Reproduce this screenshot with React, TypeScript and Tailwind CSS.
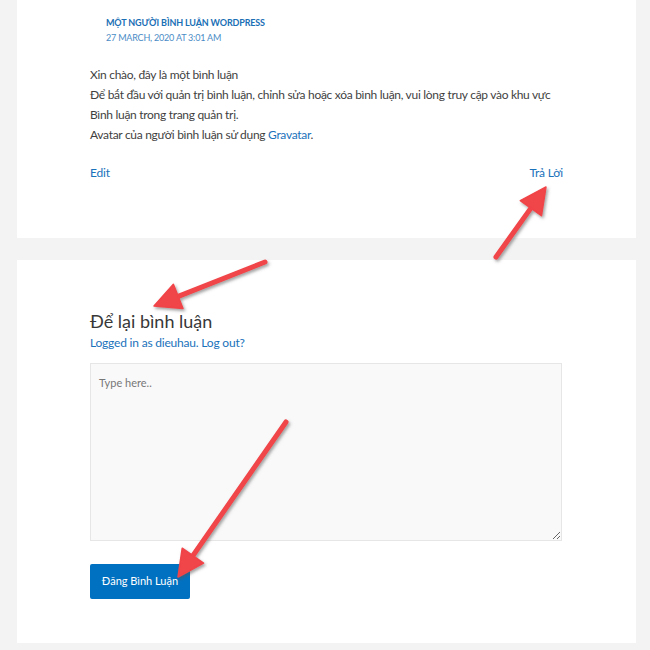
import React from 'react';

type Pt = [number, number];

// arrow drawn from tail to tip: shaft + triangular head
const arrowPaths = (tail: Pt, tip: Pt, headLen = 26, headW = 13) => {
  const dx = tip[0] - tail[0];
  const dy = tip[1] - tail[1];
  const len = Math.hypot(dx, dy);
  const ux = dx / len;
  const uy = dy / len;
  const bx = tip[0] - ux * headLen;
  const by = tip[1] - uy * headLen;
  const px = -uy;
  const py = ux;
  const head = `${tip[0]},${tip[1]} ${bx + px * headW},${by + py * headW} ${bx - px * headW},${by - py * headW}`;
  return { shaftEnd: [bx + ux * 4, by + uy * 4] as Pt, head };
};

const arrows: { tail: Pt; tip: Pt }[] = [
  { tail: [496, 257], tip: [546, 187] },
  { tail: [265, 262], tip: [154, 306] },
  { tail: [286, 422], tip: [178, 577] },
];

const Arrows = () => (
  <svg className="pointer-events-none absolute left-0 top-0" width={650} height={650}>
    <defs>
      <filter id="sh" x="-20%" y="-20%" width="140%" height="140%">
        <feDropShadow dx="1.5" dy="2" stdDeviation="1.5" floodColor="#555" floodOpacity="0.55" />
      </filter>
    </defs>
    {arrows.map((a, i) => {
      const p = arrowPaths(a.tail, a.tip);
      return (
        <g key={i} filter="url(#sh)">
          <line x1={a.tail[0]} y1={a.tail[1]} x2={p.shaftEnd[0]} y2={p.shaftEnd[1]} stroke="#f04448" strokeWidth={5} strokeLinecap="round" />
          <polygon points={p.head} fill="#f04448" stroke="#f04448" strokeWidth={1.5} strokeLinejoin="round" />
        </g>
      );
    })}
  </svg>
);

export default function App() {
  return (
    <div className="relative h-[650px] w-[650px] overflow-hidden bg-[#f3f3f3] pl-[17px] pr-[14px] font-['Lato','Open_Sans',sans-serif] text-[#3f3f3f]">
      {/* comment card */}
      <div className="bg-white pb-[55px] pl-[73px] pr-[73px] pt-[15px]">
        <div className="pl-[16px]">
          <div className="text-[9px] font-bold uppercase leading-[15px] tracking-[-0.15px] text-[#1a6fb5]">Một người bình luận WordPress</div>
          <div className="text-[9px] uppercase leading-[15px] tracking-[-0.2px] text-[#4a8cc6]">27 March, 2020 at 3:01 am</div>
        </div>
        <div className="mt-[20px] text-[12px] leading-[20px] tracking-[-0.3px]">
          <p>Xin chào, đây là một bình luận</p>
          <p className="whitespace-nowrap">Để bắt đầu với quản trị bình luận, chỉnh sửa hoặc xóa bình luận, vui lòng truy cập vào khu vực</p>
          <p>Bình luận trong trang quản trị.</p>
          <p>
            Avatar của người bình luận sử dụng <span className="text-[#1a72bb]">Gravatar</span>.
          </p>
        </div>
        <div className="mt-[18px] flex justify-between text-[12px] leading-[20px] tracking-[-0.2px] text-[#1a72bb]">
          <span>Edit</span>
          <span>Trả Lời</span>
        </div>
      </div>

      {/* reply form */}
      <div className="mt-[22px] bg-white pb-[44px] pl-[73px] pr-[74px] pt-[48px]">
        <h3 className="text-[18px] leading-[26px] text-[#383838]">Để lại bình luận</h3>
        <div className="text-[12px] leading-[18px] tracking-[-0.2px] text-[#1a72bb]">Logged in as dieuhau. Log out?</div>
        <textarea
          placeholder="Type here.."
          className="mt-[11px] block h-[178px] w-[472px] resize-y border border-[#e6e6e6] bg-[#f9f9f9] px-[8px] py-[9px] text-[11px] leading-[20px] outline-none placeholder:text-[#777]"
        />
        <button className="mt-[23px] h-[35px] w-[100px] rounded-[2px] bg-[#0071c1] text-[11px] text-white">Đăng Bình Luận</button>
      </div>

      <Arrows />
    </div>
  );
}
